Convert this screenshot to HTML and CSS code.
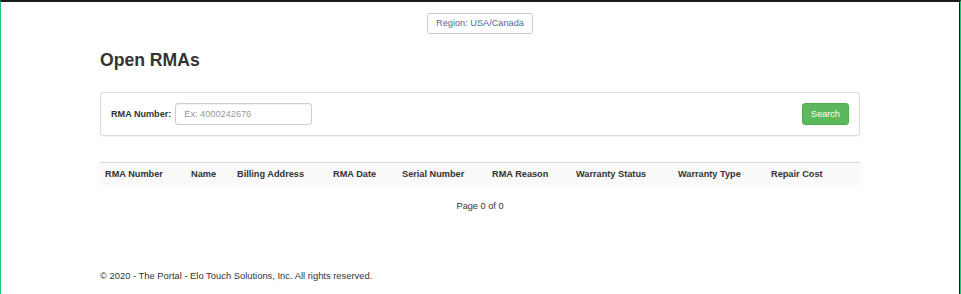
FILE: index.html
```html
<!DOCTYPE html>
<html lang="en">
<head>
<meta charset="utf-8">
<title>Open RMAs</title>
<link rel="stylesheet" href="styles.css">
</head>
<body>
<div class="frame">
  <div class="page">
    <div class="region-row">
      <button class="region-btn" type="button">Region: USA/Canada</button>
    </div>
    <h2 class="title">Open RMAs</h2>
    <div class="panel">
      <div class="search-form">
        <label class="field-label" for="rma">RMA Number:</label>
        <input class="field-input" id="rma" type="text" placeholder="Ex: 4000242676">
      </div>
      <button class="search-btn" type="button">Search</button>
    </div>
    <table class="rma-table">
      <thead>
        <tr>
          <th class="c1">RMA Number</th>
          <th class="c2">Name</th>
          <th class="c3">Billing Address</th>
          <th class="c4">RMA Date</th>
          <th class="c5">Serial Number</th>
          <th class="c6">RMA Reason</th>
          <th class="c7">Warranty Status</th>
          <th class="c8">Warranty Type</th>
          <th class="c9">Repair Cost</th>
        </tr>
      </thead>
    </table>
    <div class="pager">Page 0 of 0</div>
    <footer class="footer">© 2020 - The Portal - Elo Touch Solutions, Inc. All rights reserved.</footer>
  </div>
</div>
</body>
</html>
```

FILE: styles.css
```css
* { box-sizing: border-box; }
html, body { margin: 0; padding: 0; background: #fff; }
body {
  font-family: "Liberation Sans", Arial, sans-serif;
  color: #333;
  font-size: 9.2px;
}
.frame {
  height: 294px;
  border-top: 2px solid #1b1b1b;
  border-left: 1px solid #22c87a;
  border-right: 1px solid #22c87a;
  box-shadow: inset -1px 0 0 #1b1b1b;
  overflow: hidden;
}
.page {
  width: 760px;
  margin-left: 99px;
  display: flex;
  flex-direction: column;
}
.region-row {
  display: flex;
  justify-content: center;
  margin-top: 11px;
}
.region-btn {
  height: 21px;
  width: 106px;
  padding: 0;
  border: 1px solid #c8c8c8;
  border-radius: 3px;
  background: #fff;
  color: #4f6a98;
  font-family: "Liberation Sans", Arial, sans-serif;
  font-size: 9.2px;
  line-height: 19px;
}
.title {
  margin: 15px 0 0;
  font-size: 17.6px;
  line-height: 22px;
  font-weight: bold;
  color: #333;
}
.panel {
  margin-top: 21px;
  height: 44px;
  border: 1px solid #dcdcdc;
  border-radius: 3px;
  box-shadow: 0 1px 1px rgba(0,0,0,0.05);
  padding: 0 10px;
  display: flex;
  align-items: center;
  justify-content: space-between;
}
.search-form {
  display: flex;
  align-items: center;
}
.field-label {
  font-weight: bold;
  font-size: 9.1px;
  margin-right: 4px;
  color: #333;
}
.field-input {
  width: 137px;
  height: 22px;
  border: 1px solid #ccc;
  border-radius: 3px;
  padding: 0 8px;
  font-family: "Liberation Sans", Arial, sans-serif;
  font-size: 9.2px;
  color: #555;
  box-shadow: inset 0 1px 1px rgba(0,0,0,0.06);
}
.field-input::placeholder { color: #999; }
.search-btn {
  width: 47px;
  height: 22px;
  padding: 0;
  border: 1px solid #4cae4c;
  border-radius: 3px;
  background: #5cb85c;
  color: #fff;
  font-family: "Liberation Sans", Arial, sans-serif;
  font-size: 9.1px;
}
.rma-table {
  margin-top: 26px;
  width: 760px;
  border-collapse: collapse;
  table-layout: fixed;
  border-top: 1px solid #ddd;
}
.rma-table th {
  height: 22px;
  padding: 0 5px;
  background: #f9f9f9;
  text-align: left;
  font-weight: bold;
  font-size: 9.2px;
  color: #333;
  white-space: nowrap;
}
.c1 { width: 86px; }
.c2 { width: 46px; }
.c3 { width: 96px; }
.c4 { width: 69px; }
.c5 { width: 90px; }
.c6 { width: 84px; }
.c7 { width: 102px; }
.c8 { width: 93px; }
.c9 { width: 94px; }
.pager {
  margin-top: 15px;
  text-align: center;
  line-height: 12px;
  font-size: 9.2px;
  color: #333;
}
.footer {
  margin-top: 58px;
  line-height: 12px;
  font-size: 9.4px;
  color: #333;
}
```
